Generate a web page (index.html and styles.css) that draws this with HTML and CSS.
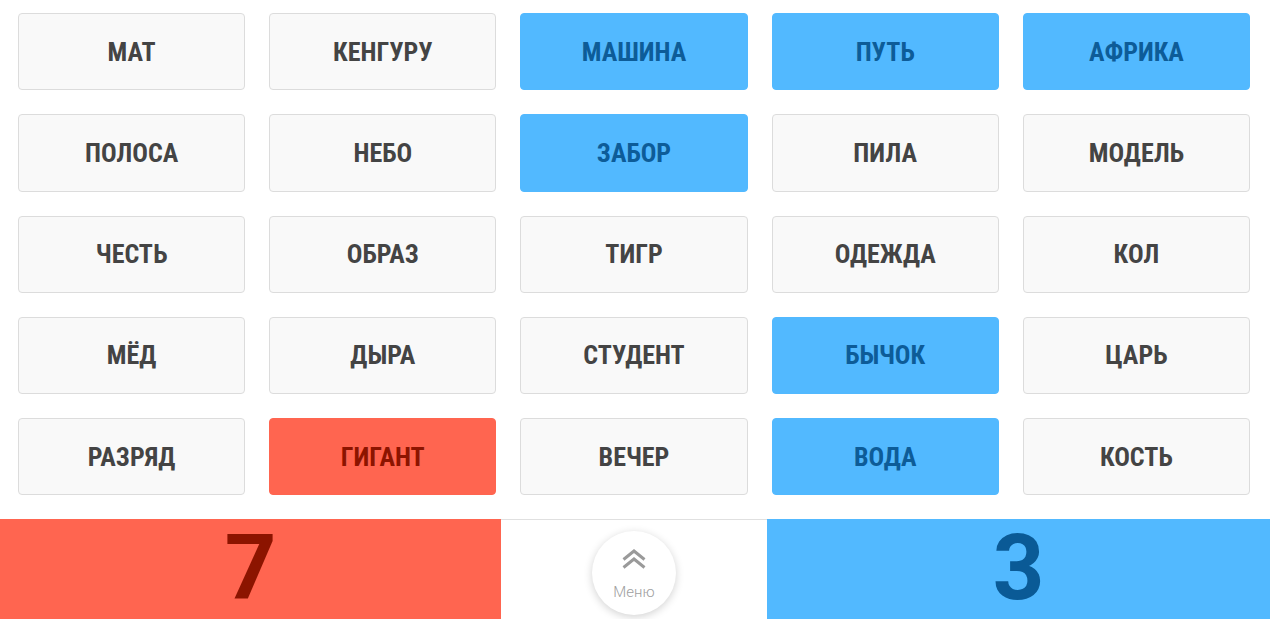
FILE: index.html
```html
<!DOCTYPE html>
<html lang="ru">
<head>
  <meta charset="UTF-8" />
  <meta name="viewport" content="width=device-width, initial-scale=1.0"/>
  <title>Кодовые имена</title>
  <link rel="stylesheet" href="styles.css">
</head>
<body>

  <!-- Поле со словами -->
  <div class="board">
    <div class="word">МАТ</div>
    <div class="word">КЕНГУРУ</div>
    <div class="word blue">МАШИНА</div>
    <div class="word blue">ПУТЬ</div>
    <div class="word blue">АФРИКА</div>

    <div class="word">ПОЛОСА</div>
    <div class="word">НЕБО</div>
    <div class="word blue">ЗАБОР</div>
    <div class="word">ПИЛА</div>
    <div class="word">МОДЕЛЬ</div>

    <div class="word">ЧЕСТЬ</div>
    <div class="word">ОБРАЗ</div>
    <div class="word">ТИГР</div>
    <div class="word">ОДЕЖДА</div>
    <div class="word">КОЛ</div>

    <div class="word">МЁД</div>
    <div class="word">ДЫРА</div>
    <div class="word">СТУДЕНТ</div>
    <div class="word blue">БЫЧОК</div>
    <div class="word">ЦАРЬ</div>

    <div class="word">РАЗРЯД</div>
    <div class="word red">ГИГАНТ</div>
    <div class="word">ВЕЧЕР</div>
    <div class="word blue">ВОДА</div>
    <div class="word">КОСТЬ</div>
  </div>

  <!-- Счёт и меню -->
  <div class="score-bar">
    <div class="score red"><span>7</span></div>
    <div class="menu-area">
      <button class="menu-btn">
        <svg width="24" height="20" viewBox="0 0 24 20">
          <path d="M1.5 10.5 L12 2 L22.5 10.5" fill="none" stroke="#9a9a9a" stroke-width="3"/>
          <path d="M1.5 18.5 L12 10 L22.5 18.5" fill="none" stroke="#9a9a9a" stroke-width="3"/>
        </svg>
        <span>Меню</span>
      </button>
    </div>
    <div class="score blue"><span>3</span></div>
  </div>

</body>
</html>
```

FILE: styles.css
```css
* { box-sizing: border-box; }

body {
  margin: 0;
  padding: 0;
  font-family: 'Roboto Condensed', 'Roboto', sans-serif;
  background: #fff;
  height: 100vh;
  display: flex;
  flex-direction: column;
  overflow: hidden;
}

.board {
  flex: 1;
  display: grid;
  grid-template-columns: repeat(5, 1fr);
  grid-auto-rows: 77.25px;
  gap: 24px;
  padding: 13px 20px 0 18px;
}

.word {
  display: flex;
  justify-content: center;
  align-items: center;
  background: #f9f9f9;
  border: 1px solid #dcdcdc;
  border-radius: 4px;
  color: #444;
  font-size: 26px;
  font-weight: 700;
  font-stretch: condensed;
}

.word.blue {
  background: #52b9ff;
  border-color: #52b9ff;
  color: #0d5c98;
}

.word.red {
  background: #ff6550;
  border-color: #ff6550;
  color: #8c1400;
}

.score-bar {
  height: 100px;
  display: grid;
  grid-template-columns: 501px 1fr 503px;
}

.score {
  display: flex;
  justify-content: center;
  align-items: center;
  font-family: 'Roboto', sans-serif;
  font-weight: 700;
}

.score span {
  font-size: 90px;
  line-height: 84px;
  display: block;
}

.score.red {
  background: #ff6550;
  color: #8c1400;
}

.score.blue {
  background: #52b9ff;
  color: #0a5a96;
}

.menu-area {
  border-top: 1px solid #e0e0e0;
  display: flex;
  justify-content: center;
  padding-top: 11px;
}

.menu-btn {
  width: 84px;
  height: 84px;
  border-radius: 50%;
  border: none;
  background: #fff;
  box-shadow: 0 2px 8px rgba(0,0,0,0.18);
  display: flex;
  flex-direction: column;
  align-items: center;
  padding: 18px 0 0;
  cursor: pointer;
}

.menu-btn span {
  font-family: 'Roboto', sans-serif;
  font-weight: 300;
  font-size: 15px;
  color: #a0a0a0;
  margin-top: 16px;
  line-height: 1;
}
```
